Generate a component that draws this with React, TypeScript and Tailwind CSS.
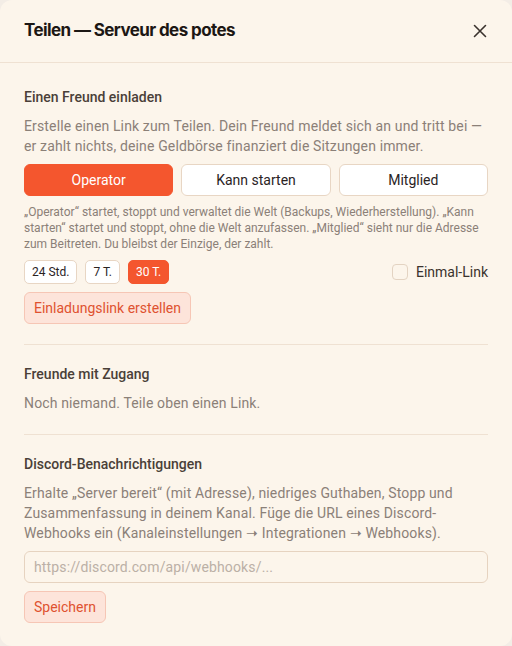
import { useState } from 'react'

const ROLES = ['Operator', 'Kann starten', 'Mitglied']
const DAUER = ['24 Std.', '7 T.', '30 T.']

export default function App() {
  const [rolle, setRolle] = useState('Operator')
  const [dauer, setDauer] = useState('30 T.')
  const [einmal, setEinmal] = useState(false)

  return (
    <div className="min-h-screen bg-[#f3ede6]" style={{ fontFamily: 'Roboto, "Liberation Sans", sans-serif' }}>
      <div className="h-[646px] w-[512px] rounded-xl bg-[#fcf5eb] overflow-hidden">
        {/* Kopf */}
        <div className="flex h-[63px] items-center justify-between border-b border-[#efe1d2] px-6">
          <h1 className="text-[17px] font-bold tracking-[-0.035em] text-[#1c1714]" style={{ fontFamily: 'Inter, sans-serif' }}>Teilen — Serveur des potes</h1>
          <button className="text-[#3a322d]">
            <svg width="16" height="16" viewBox="0 0 16 16" fill="none" stroke="currentColor" strokeWidth="1.6" strokeLinecap="round">
              <path d="M2.5 2.5l11 11M13.5 2.5l-11 11" />
            </svg>
          </button>
        </div>

        <div className="px-6">
          {/* Einladen */}
          <div className="pt-[24px] pb-[20px]">
            <h2 className="text-[14px] font-medium text-[#4a3f38]">Einen Freund einladen</h2>
            <p className="mt-[8px] text-[14px] leading-[20px] tracking-[0.01em] text-[#8b8078]">
              Erstelle einen Link zum Teilen. Dein Freund meldet sich an und tritt bei — er zahlt nichts, deine Geldbörse finanziert die Sitzungen immer.
            </p>
            <div className="mt-[8px] grid grid-cols-3 gap-2">
              {ROLES.map(r => (
                <button key={r} onClick={() => setRolle(r)}
                  className={`h-[32px] rounded-md border text-[14px] ${
                    rolle === r ? 'border-[#f4562e] bg-[#f4562e] text-white' : 'border-[#e8d6c4] bg-white text-[#2a231f]'
                  }`}>
                  {r}
                </button>
              ))}
            </div>
            <p className="mt-[8px] text-[12px] leading-[16px] text-[#8b8078]">
              „Operator“ startet, stoppt und verwaltet die Welt (Backups, Wiederherstellung). „Kann starten“ startet und stoppt, ohne die Welt anzufassen. „Mitglied“ sieht nur die Adresse zum Beitreten. Du bleibst der Einzige, der zahlt.
            </p>
            <div className="mt-[8px] flex items-center">
              <div className="flex gap-2">
                {DAUER.map(d => (
                  <button key={d} onClick={() => setDauer(d)}
                    className={`h-[24px] rounded-[5px] border px-[7px] text-[12px] ${
                      dauer === d ? 'border-[#f4562e] bg-[#f4562e] text-white' : 'border-[#e8d6c4] bg-white text-[#2a231f]'
                    }`}>
                    {d}
                  </button>
                ))}
              </div>
              <label className="ml-auto flex items-center gap-2 text-[14px] text-[#3a322d]">
                <span onClick={() => setEinmal(!einmal)}
                  className={`h-4 w-4 rounded-[4px] border ${einmal ? 'border-[#f4562e] bg-[#f4562e]' : 'border-[#e3d3c2] bg-[#fcf5eb]'}`} />
                Einmal-Link
              </label>
            </div>
            <button className="mt-[8px] h-[32px] rounded-md border border-[#f6c6b5] bg-[#fde4da] px-[9px] text-[14px] text-[#df5230]">
              Einladungslink erstellen
            </button>
          </div>

          {/* Freunde */}
          <div className="border-t border-[#efe1d2] pt-[19px] pb-[21px]">
            <h2 className="text-[14px] font-medium text-[#4a3f38]">Freunde mit Zugang</h2>
            <p className="mt-[8px] text-[14px] leading-[20px] tracking-[0.01em] text-[#8b8078]">Noch niemand. Teile oben einen Link.</p>
          </div>

          {/* Discord */}
          <div className="border-t border-[#efe1d2] pt-[19px] pb-6">
            <h2 className="text-[14px] font-medium text-[#4a3f38]">Discord-Benachrichtigungen</h2>
            <p className="mt-[8px] text-[14px] leading-[20px] tracking-[0.01em] text-[#8b8078]" style={{ fontFamily: 'Roboto, Inter, sans-serif' }}>
              Erhalte „Server bereit“ (mit Adresse), niedriges Guthaben, Stopp und Zusammenfassung in deinem Kanal. Füge die URL eines Discord-Webhooks ein (Kanaleinstellungen ➝ Integrationen ➝ Webhooks).
            </p>
            <input placeholder="https://discord.com/api/webhooks/..."
              className="mt-[8px] h-[32px] w-full rounded-md border border-[#e6d3c0] bg-[#fcf5eb] px-[9px] text-[14px] tracking-[0.01em] text-[#2a231f] outline-none placeholder:text-[#bbb0a6]" />
            <button className="mt-[8px] h-[32px] rounded-md border border-[#f6c6b5] bg-[#fde4da] px-[9px] text-[14px] text-[#df5230]">
              Speichern
            </button>
          </div>
        </div>
      </div>
    </div>
  )
}
